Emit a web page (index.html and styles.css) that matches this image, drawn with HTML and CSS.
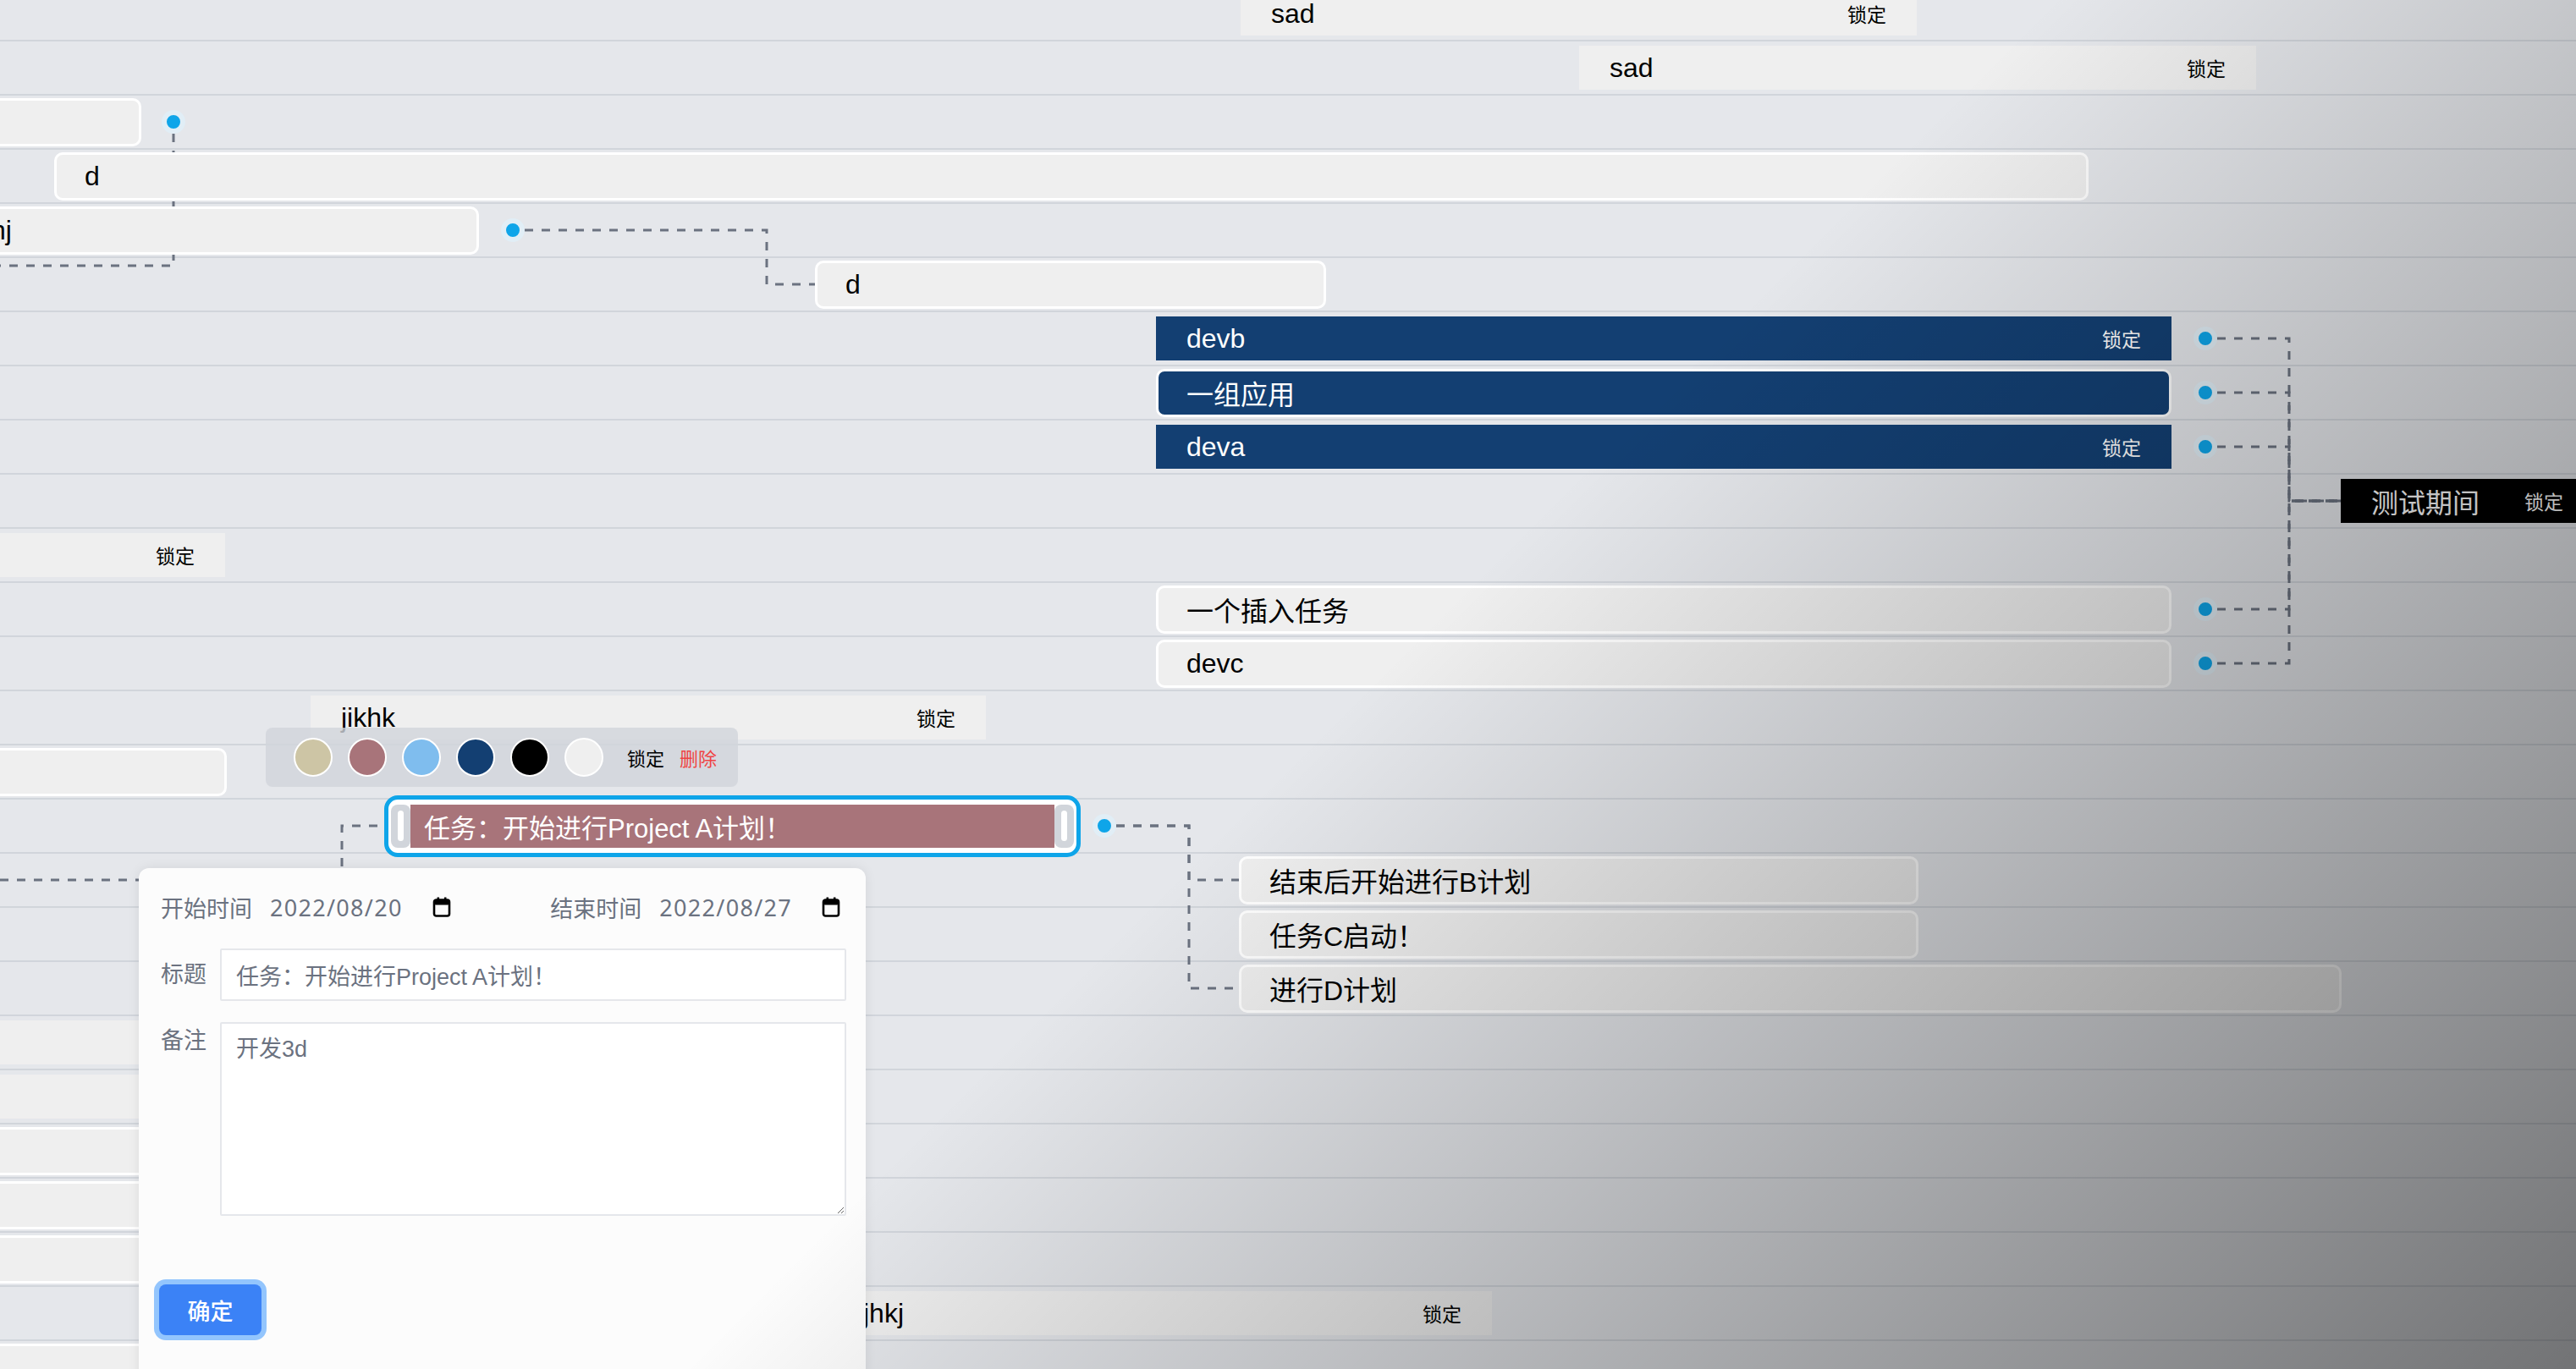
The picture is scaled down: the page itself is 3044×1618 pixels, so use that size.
FILE: index.html
```html
<!DOCTYPE html>
<html lang="zh-CN">
<head>
<meta charset="utf-8">
<title>Gantt</title>
<link rel="stylesheet" href="styles.css">
</head>
<body>
<div class="gantt">
  <svg class="links" width="3044" height="1618" viewBox="0 0 3044 1618">
    <g class="link">
      <path d="M205 158 V314 H0"/>
      <path d="M620 272 H906 V336 H963"/>
      <path d="M2620 400 H2705 V592 H2766"/>
      <path d="M2620 464 H2705 V592 H2766"/>
      <path d="M2620 528 H2705 V592 H2766"/>
      <path d="M2620 720 H2705 V592 H2766"/>
      <path d="M2620 784 H2705 V592 H2766"/>
      <path d="M1319 976 H1405 V1040 H1464"/>
      <path d="M1319 976 H1405 V1168 H1464"/>
      <path d="M0 1040 H404 V976 H454"/>
    </g>
  </svg>

  <div class="rows">
    <div class="row"><div class="bar" style="margin-left:1466px;width:799px"><span>sad</span><span class="lock">锁定</span></div></div>
    <div class="row"><div class="bar" style="margin-left:1866px;width:800px"><span>sad</span><span class="lock">锁定</span></div></div>
    <div class="row"><div class="bar framed" style="margin-left:-400px;width:567px"><span></span></div><span class="dot" style="margin-left:24px"></span></div>
    <div class="row"><div class="bar framed" style="margin-left:64px;width:2404px"><span>d</span></div></div>
    <div class="row"><div class="bar framed" style="margin-left:-47px;width:613px"><span>hj</span></div><span class="dot"></span></div>
    <div class="row"><div class="bar framed" style="margin-left:963px;width:604px"><span>d</span></div></div>
    <div class="row"><div class="bar navy" style="margin-left:1366px;width:1200px"><span>devb</span><span class="lock">锁定</span></div><span class="dot"></span></div>
    <div class="row"><div class="bar framed navy" style="margin-left:1366px;width:1200px"><span>一组应用</span></div><span class="dot"></span></div>
    <div class="row"><div class="bar navy" style="margin-left:1366px;width:1200px"><span>deva</span><span class="lock">锁定</span></div><span class="dot"></span></div>
    <div class="row"><div class="bar black" style="margin-left:2766px;width:299px"><span>测试期间</span><span class="lock">锁定</span></div></div>
    <div class="row"><div class="bar" style="margin-left:-400px;width:666px"><span></span><span class="lock">锁定</span></div></div>
    <div class="row"><div class="bar framed" style="margin-left:1366px;width:1200px"><span>一个插入任务</span></div><span class="dot"></span></div>
    <div class="row"><div class="bar framed" style="margin-left:1366px;width:1200px"><span>devc</span></div><span class="dot"></span></div>
    <div class="row"><div class="bar" style="margin-left:367px;width:798px"><span>jikhk</span><span class="lock">锁定</span></div></div>
    <div class="row"><div class="bar framed" style="margin-left:-400px;width:668px"><span></span></div></div>
    <div class="row">
      <div class="selected" style="margin-left:454px;width:823px">
        <span class="handle"></span>
        <span class="fill">任务：开始进行Project A计划！</span>
        <span class="handle"></span>
      </div>
      <span class="dot dot-near"></span>
    </div>
    <div class="row"><div class="bar framed" style="margin-left:1464px;width:803px"><span>结束后开始进行B计划</span></div></div>
    <div class="row"><div class="bar framed" style="margin-left:1464px;width:803px"><span>任务C启动！</span></div></div>
    <div class="row"><div class="bar framed" style="margin-left:1464px;width:1303px"><span>进行D计划</span></div></div>
    <div class="row"><div class="bar" style="margin-left:-400px;width:640px"><span></span></div></div>
    <div class="row"><div class="bar" style="margin-left:-400px;width:640px"><span></span></div></div>
    <div class="row"><div class="bar framed" style="margin-left:-400px;width:640px"><span></span></div></div>
    <div class="row"><div class="bar framed" style="margin-left:-400px;width:640px"><span></span></div></div>
    <div class="row"><div class="bar framed" style="margin-left:-400px;width:640px"><span></span></div></div>
    <div class="row"><div class="bar" style="margin-left:984px;width:779px"><span>jhkj</span><span class="lock">锁定</span></div></div>
    <div class="row"><div class="bar framed" style="margin-left:-400px;width:640px"><span></span></div></div>
  </div>

  <div class="picker">
    <span class="swatch" style="background:#cdc5a5"></span>
    <span class="swatch" style="background:#a8747a"></span>
    <span class="swatch" style="background:#7fbdee"></span>
    <span class="swatch" style="background:#133f72"></span>
    <span class="swatch" style="background:#000000"></span>
    <span class="swatch" style="background:#efefef"></span>
    <span class="picker-lock">锁定</span>
    <span class="picker-del">删除</span>
  </div>

  <form class="editor">
    <div class="dates">
      <div class="date-group">
        <span class="date-label">开始时间</span>
        <span class="date-value">2022/08/20</span>
        <svg class="cal" width="22" height="24" viewBox="0 0 22 24"><rect x="2" y="3.5" width="18" height="19" rx="2.5" fill="none" stroke="#000" stroke-width="2.6"/><rect x="2" y="3.5" width="18" height="6" rx="2" fill="#000"/><rect x="5.5" y="0.5" width="2.6" height="5" fill="#000"/><rect x="13.9" y="0.5" width="2.6" height="5" fill="#000"/></svg>
      </div>
      <div class="date-group date-group-end">
        <span class="date-label">结束时间</span>
        <span class="date-value">2022/08/27</span>
        <svg class="cal" width="22" height="24" viewBox="0 0 22 24"><rect x="2" y="3.5" width="18" height="19" rx="2.5" fill="none" stroke="#000" stroke-width="2.6"/><rect x="2" y="3.5" width="18" height="6" rx="2" fill="#000"/><rect x="5.5" y="0.5" width="2.6" height="5" fill="#000"/><rect x="13.9" y="0.5" width="2.6" height="5" fill="#000"/></svg>
      </div>
    </div>
    <div class="field">
      <label class="field-label">标题</label>
      <input class="text-input" type="text" value="任务：开始进行Project A计划！">
    </div>
    <div class="field field-top">
      <label class="field-label field-label-top">备注</label>
      <textarea class="text-area">开发3d</textarea>
    </div>
    <button class="ok" type="button">确定</button>
  </form>

  <div class="shade"></div>
</div>
</body>
</html>
```

FILE: styles.css
```css
html, body {
  margin: 0;
  padding: 0;
}

body {
  width: 3044px;
  height: 1618px;
  overflow: hidden;
  background: #e5e7eb;
  font-family: "Liberation Sans", "Noto Sans CJK SC", sans-serif;
  color: #000;
}

.gantt {
  position: relative;
  width: 3044px;
  height: 1618px;
  overflow: hidden;
}

.links {
  position: absolute;
  left: 0;
  top: 0;
  z-index: 1;
}

.link path {
  fill: none;
  stroke: #6b7280;
  stroke-width: 3;
  stroke-dasharray: 10 10;
}

.rows {
  margin-top: -15px;
  display: flex;
  flex-direction: column;
}

.row {
  height: 64px;
  flex: none;
  box-sizing: border-box;
  border-bottom: 2px solid #d1d5db;
  display: flex;
  align-items: center;
}

.bar {
  position: relative;
  z-index: 2;
  flex: none;
  box-sizing: border-box;
  height: 52px;
  padding: 0 36px;
  display: flex;
  align-items: center;
  justify-content: space-between;
  background: #efefef;
  color: #000;
  font-size: 32px;
  white-space: nowrap;
}

.bar.framed {
  height: 57px;
  border: 3px solid #ffffff;
  border-radius: 10px;
  padding: 0 33px;
}

.bar.navy {
  background: #133f72;
  color: #fff;
}

.bar.black {
  background: #000;
  color: #fff;
}

.lock {
  font-size: 23px;
}

.dot {
  position: relative;
  z-index: 2;
  flex: none;
  width: 28px;
  height: 28px;
  box-sizing: border-box;
  margin-left: 26px;
  border-radius: 50%;
  background: #0ea5e9;
  border: 6px solid rgba(243, 244, 246, 0.92);
}

.dot-near {
  margin-left: 14px;
}

.selected {
  position: relative;
  z-index: 2;
  flex: none;
  box-sizing: border-box;
  height: 73px;
  padding: 6px 3px;
  display: flex;
  border: 5px solid #0ea5e9;
  border-radius: 16px;
  background: #fff;
}

.selected .fill {
  flex: 1;
  display: flex;
  align-items: center;
  padding-left: 16px;
  background: #a8747a;
  color: #fff;
  font-size: 31px;
  white-space: nowrap;
}

.handle {
  flex: none;
  width: 23px;
  border-radius: 8px;
  background: #d1d5db;
  display: flex;
  align-items: center;
  justify-content: center;
}

.handle::before {
  content: "";
  width: 7px;
  height: 36px;
  border-radius: 4px;
  background: #fff;
}

.picker {
  position: absolute;
  z-index: 3;
  left: 314px;
  top: 860px;
  width: 558px;
  height: 70px;
  box-sizing: border-box;
  padding-left: 33px;
  display: flex;
  align-items: center;
  background: rgba(209, 212, 219, 0.8);
  border-radius: 8px;
}

.swatch {
  flex: none;
  width: 46px;
  height: 46px;
  box-sizing: border-box;
  margin-right: 18px;
  border-radius: 50%;
  border: 2px solid #fff;
}

.picker-lock {
  margin-left: 10px;
  font-size: 22px;
  color: #000;
}

.picker-del {
  margin-left: 18px;
  font-size: 22px;
  color: #ef4444;
}

.editor {
  position: absolute;
  z-index: 4;
  left: 164px;
  top: 1026px;
  width: 859px;
  height: 640px;
  box-sizing: border-box;
  margin: 0;
  padding: 28px 23px 0 26px;
  background: #fcfcfc;
  border-radius: 12px;
  box-shadow: 0 0 14px rgba(0, 0, 0, 0.08);
  font-size: 27px;
  color: #6b7280;
}

.dates {
  height: 36px;
  display: flex;
  align-items: center;
  justify-content: space-between;
}

.date-group {
  display: flex;
  align-items: center;
}

.date-group-end {
  padding-right: 7px;
}

.date-label {
  white-space: nowrap;
}

.date-value {
  margin-left: 21px;
  font-family: "Noto Sans", "Liberation Sans", sans-serif;
  letter-spacing: 1.3px;
  white-space: nowrap;
}

.cal {
  margin-left: 35px;
  flex: none;
}

.field {
  margin-top: 31px;
  display: flex;
  align-items: center;
  gap: 14px;
}

.field-top {
  margin-top: 25px;
  align-items: flex-start;
}

.field-label {
  flex: none;
  width: 56px;
  line-height: 36px;
  white-space: nowrap;
}

.field-label-top {
  padding-top: 4px;
}

.text-input {
  flex: 1;
  min-width: 0;
  height: 62px;
  box-sizing: border-box;
  margin: 0;
  padding: 0 17px;
  border: 2px solid #e5e7eb;
  border-radius: 2px;
  background: #fff;
  font-family: "Liberation Sans", "Noto Sans CJK SC", sans-serif;
  font-size: 27px;
  color: #6b7280;
  outline: none;
}

.text-area {
  flex: 1;
  min-width: 0;
  height: 229px;
  box-sizing: border-box;
  margin: 0;
  padding: 12px 17px;
  border: 2px solid #e5e7eb;
  border-radius: 2px;
  background: #fff;
  font-family: "Liberation Sans", "Noto Sans CJK SC", sans-serif;
  font-size: 27px;
  line-height: 36px;
  color: #6b7280;
  resize: both;
  outline: none;
}

.ok {
  display: block;
  margin: 81px 0 0 -2px;
  width: 121px;
  height: 60px;
  padding: 0;
  border: none;
  border-radius: 8px;
  background: #3b82f6;
  box-shadow: 0 0 0 6px #93c5fd;
  color: #fff;
  font-family: "Liberation Sans", "Noto Sans CJK SC", sans-serif;
  font-size: 27px;
  font-weight: 500;
}

.shade {
  position: absolute;
  inset: 0;
  z-index: 10;
  pointer-events: none;
  background: linear-gradient(135deg, rgba(0, 0, 0, 0) 52%, rgba(0, 0, 0, 0.5) 100%);
}
```
